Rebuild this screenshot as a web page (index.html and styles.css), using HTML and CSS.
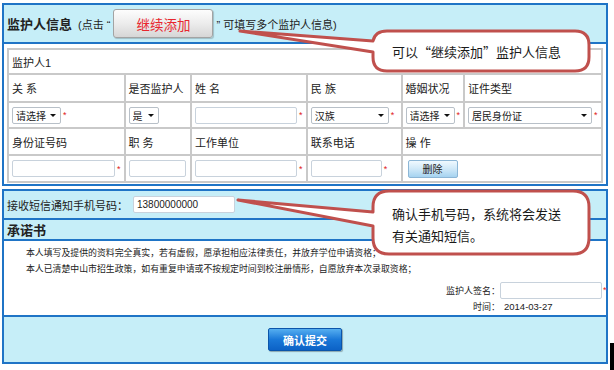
FILE: index.html
```html
<!DOCTYPE html>
<html lang="zh-CN">
<head>
<meta charset="utf-8">
<title>监护人信息</title>
<link rel="stylesheet" href="styles.css">
</head>
<body>
<div class="page">

	<div class="panel">
		<div class="panel-head">
			<b class="title">监护人信息</b>
			<span class="hint">(点击 “</span>
			<button class="btn-add">继续添加</button>
			<span class="hint">” 可填写多个监护人信息)</span>
		</div>
		<div class="panel-body">
			<table class="grid">
				<colgroup>
					<col class="c1"><col class="c2"><col class="c3"><col class="c4"><col class="c5"><col class="c6">
				</colgroup>
				<tr class="r-name"><td colspan="6">监护人1</td></tr>
				<tr class="r-label">
					<td>关 系</td><td>是否监护人</td><td>姓 名</td><td>民 族</td><td>婚姻状况</td><td>证件类型</td>
				</tr>
				<tr class="r-input">
					<td><span class="sel w49"><select><option>请选择</option></select></span><span class="req">*</span></td>
					<td><span class="sel w30"><select><option>是</option></select></span></td>
					<td><input class="txt w102" type="text"><span class="req">*</span></td>
					<td><span class="sel w78"><select><option>汉族</option></select></span><span class="req">*</span></td>
					<td><span class="sel w49"><select><option>请选择</option></select></span><span class="req">*</span></td>
					<td><span class="sel w124"><select><option>居民身份证</option></select></span><span class="req">*</span></td>
				</tr>
				<tr class="r-label2">
					<td>身份证号码</td><td>职 务</td><td>工作单位</td><td>联系电话</td><td colspan="2">操 作</td>
				</tr>
				<tr class="r-input2">
					<td><input class="txt w103" type="text"><span class="req">*</span></td>
					<td><input class="txt w57" type="text"></td>
					<td><input class="txt w102" type="text"><span class="req">*</span></td>
					<td><input class="txt w71" type="text"><span class="req">*</span></td>
					<td colspan="2"><button class="btn-del">删除</button></td>
				</tr>
			</table>
		</div>
	</div>

	<div class="panel panel-pledge">
		<div class="sms-row">
			<span>接收短信通知手机号码：</span>
			<input class="txt phone" type="text" value="13800000000">
		</div>
		<div class="section-head">承诺书</div>
		<div class="pledge">
			<p>本人填写及提供的资料完全真实，若有虚假，愿承担相应法律责任，并放弃学位申请资格；</p>
			<p>本人已清楚中山市招生政策，如有重复申请或不按规定时间到校注册情形，自愿放弃本次录取资格；</p>
			<div class="sign">
				<span class="sign-label">监护人签名：</span>
				<span class="sign-value"><input class="txt w102" type="text"><span class="req">*</span></span>
				<span class="sign-label">时间：</span>
				<span class="sign-value date">2014-03-27</span>
			</div>
		</div>
		<div class="foot">
			<button class="btn-submit">确认提交</button>
		</div>
	</div>

	<svg class="callouts" width="614" height="370" viewBox="0 0 614 370">
		<path d="M 387 31 H 575 Q 589 31 589 45 V 57 Q 589 71 575 71 H 387 Q 373 71 373 57 V 52 L 240 31 L 373 41 Q 375 31 387 31 Z"/>
		<path d="M 389 191 H 573 Q 589 191 589 207 V 238 Q 589 254 573 254 H 389 Q 373 254 373 238 V 226 L 238 200 L 373 212 V 207 Q 373 191 389 191 Z"/>
	</svg>
	<div class="callout-text tip-add">可以“继续添加”监护人信息</div>
	<div class="callout-text tip-sms">确认手机号码，系统将会发送<br>有关通知短信。</div>

	<div class="edge-mark"></div>

</div>
</body>
</html>
```

FILE: styles.css
```css
html, body {
	margin: 0;
	background: #ffffff;
}

body {
	font-family: "Liberation Sans", "Noto Sans CJK SC", sans-serif;
	font-size: 11px;
	color: #222222;
}

.page {
	position: relative;
	width: 614px;
	height: 370px;
	padding: 3px 0 0 2px;
	box-sizing: border-box;
	overflow: hidden;
}

/* panels */

.panel {
	width: 606px;
	box-sizing: border-box;
	border: 2px solid #1f74c6;
}

.panel + .panel {
	margin-top: 3px;
}

.panel-head {
	height: 37px;
	display: flex;
	align-items: center;
	padding-left: 3px;
	background: #c6eef8;
	border-bottom: 2px solid #1f74c6;
}

.panel-head .title {
	font-family: "Noto Sans CJK SC", sans-serif;
	font-size: 13px;
	margin-right: 6px;
}

.panel-head .hint {
	font-size: 11px;
}

.btn-add {
	width: 100px;
	height: 29px;
	margin: 0 3px;
	padding: 0;
	border: 1px solid #a3a3a3;
	border-radius: 3px;
	background: linear-gradient(#fdfdfd, #ececec 50%, #d6d6d6);
	box-shadow: 1px 1px 1px rgba(0, 0, 0, 0.2);
	color: #e8262e;
	font-family: "Noto Sans CJK SC", sans-serif;
	font-size: 13.5px;
}

.panel-body {
	padding: 4px 3px 1px 3px;
	background: #ffffff;
}

/* table */

.grid {
	border-collapse: collapse;
	table-layout: fixed;
}

.grid .c1 { width: 116px; }
.grid .c2 { width: 67px; }
.grid .c3 { width: 116px; }
.grid .c4 { width: 96px; }
.grid .c5 { width: 62px; }
.grid .c6 { width: 138px; }

.grid td {
	border: 2px solid #c9c9c9;
	padding: 0 3px;
	white-space: nowrap;
	vertical-align: middle;
}

.grid tr.r-name { height: 25px; }
.grid tr.r-label { height: 28px; }
.grid tr.r-input { height: 26px; }
.grid tr.r-label2 { height: 27px; }
.grid tr.r-input2 { height: 27px; }

/* form controls */

.sel {
	position: relative;
	display: inline-block;
	vertical-align: middle;
}

.sel select {
	appearance: none;
	-webkit-appearance: none;
	width: 100%;
	height: 17px;
	margin: 0;
	padding: 0 0 0 3px;
	border: 1px solid #b8c0c8;
	border-radius: 2px;
	background: #ffffff;
	color: #222222;
	font-family: "Noto Sans CJK SC", sans-serif;
	font-size: 10px;
}

.sel::after {
	content: "";
	position: absolute;
	right: 5px;
	top: 7px;
	border-left: 3px solid transparent;
	border-right: 3px solid transparent;
	border-top: 3px solid #111111;
}

.w30 { width: 30px; }
.w49 { width: 49px; }
.w57 { width: 57px; }
.w71 { width: 71px; }
.w78 { width: 78px; }
.w102 { width: 102px; }
.w103 { width: 103px; }
.w124 { width: 124px; }

.txt {
	height: 17px;
	margin: 0;
	padding: 0 3px;
	box-sizing: border-box;
	border: 1px solid #c8d2dc;
	border-radius: 2px;
	vertical-align: middle;
	font-family: "Liberation Sans", sans-serif;
	font-size: 10px;
	color: #222222;
}

.req {
	display: inline-block;
	margin-left: 2px;
	color: #e02020;
	font-size: 9px;
	vertical-align: middle;
}

.btn-del {
	width: 50px;
	height: 18px;
	margin-left: 2px;
	padding: 0;
	border: 1px solid #8cb6d6;
	border-radius: 2px;
	background: linear-gradient(#f0f9ff, #cfe8f8 50%, #a6d3f0);
	color: #222222;
	font-family: "Noto Sans CJK SC", sans-serif;
	font-size: 10px;
}

/* second panel */

.sms-row {
	height: 27px;
	display: flex;
	align-items: center;
	padding-left: 3px;
	background: #c6eef8;
	border-bottom: 2px solid #1f74c6;
	font-family: "Noto Sans CJK SC", sans-serif;
}

.sms-row .phone {
	width: 102px;
	margin-left: 5px;
}

.section-head {
	height: 19px;
	line-height: 19px;
	padding-left: 3px;
	background: #c6eef8;
	border-bottom: 2px solid #1f74c6;
	font-family: "Noto Sans CJK SC", sans-serif;
	font-size: 13px;
	font-weight: bold;
}

.pledge {
	height: 76px;
	box-sizing: border-box;
	padding: 4px 0 0 22px;
	background: #ffffff;
	border-bottom: 2px solid #1f74c6;
}

.pledge p {
	margin: 0;
	line-height: 16px;
	font-family: "Noto Sans CJK SC", sans-serif;
	font-size: 8.9px;
}

.sign {
	display: grid;
	grid-template-columns: auto 106px;
	grid-auto-rows: 16px;
	justify-content: end;
	align-items: center;
	margin-top: 5px;
	font-size: 9px;
}

.sign-label {
	text-align: right;
	font-family: "Noto Sans CJK SC", sans-serif;
}

.sign-value {
	white-space: nowrap;
}

.sign-value .req {
	margin-left: 1px;
}

.sign-value.date {
	padding-left: 4px;
	font-size: 9.5px;
}

.foot {
	height: 45px;
	display: flex;
	align-items: center;
	justify-content: center;
	background: #c6eef8;
}

.btn-submit {
	width: 74px;
	height: 23px;
	padding: 0;
	border: 1px solid #0b55aa;
	border-radius: 2px;
	background: linear-gradient(#55aef0, #1a78d8 50%, #0c62c6);
	box-shadow: 1px 1px 1px rgba(0, 0, 0, 0.3);
	color: #ffffff;
	font-family: "Noto Sans CJK SC", sans-serif;
	font-size: 11px;
	font-weight: bold;
}

/* callouts lie over the form */

.callouts {
	position: absolute;
	left: 0;
	top: 0;
	pointer-events: none;
}

.callouts path {
	fill: #ffffff;
	stroke: #c0504d;
	stroke-width: 3;
	stroke-linejoin: round;
}

.callout-text {
	position: absolute;
	left: 392px;
	font-family: "Noto Sans CJK SC", sans-serif;
	font-size: 13px;
	color: #1a1a1a;
	white-space: nowrap;
}

.tip-add {
	top: 42px;
	line-height: 20px;
}

.tip-sms {
	top: 203px;
	line-height: 22px;
}

.edge-mark {
	position: absolute;
	left: 610px;
	top: 343px;
	width: 4px;
	height: 27px;
	background: #000000;
}
```
